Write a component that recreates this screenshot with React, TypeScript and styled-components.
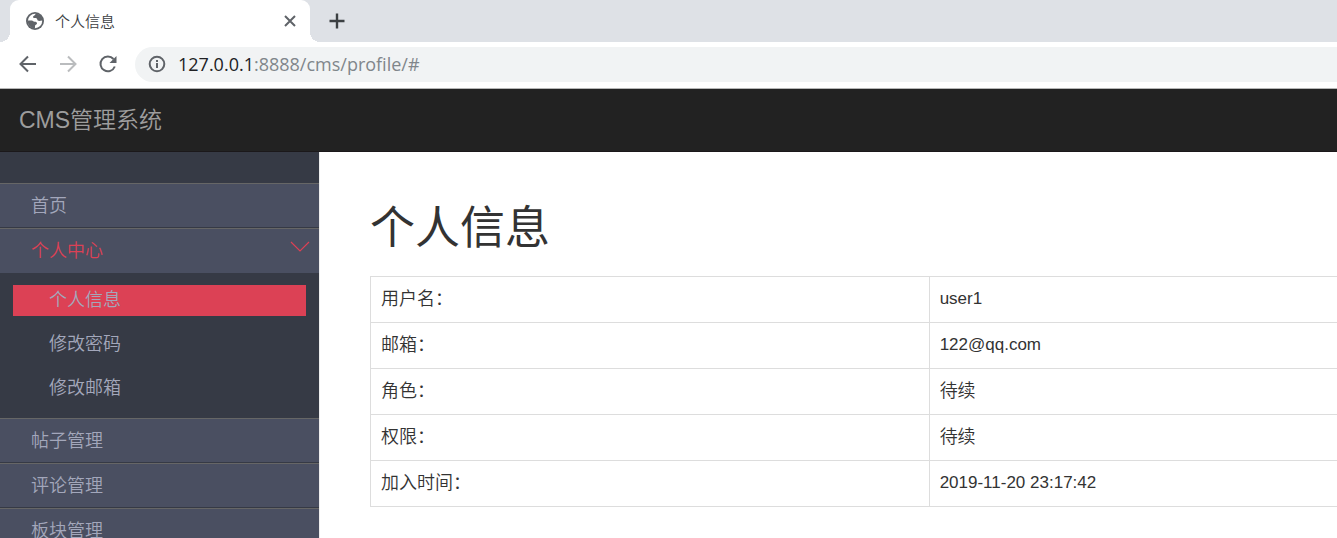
import React from "react";
import styled, { createGlobalStyle, css } from "styled-components";

const GlobalStyle = createGlobalStyle`
  *, *::before, *::after { box-sizing: border-box; }
  html, body { margin: 0; padding: 0; }
  body {
    background: #fff;
    color: #333;
    font-family: "Liberation Sans", "Noto Sans CJK SC", sans-serif;
    font-size: 18px;
    font-weight: 350;
  }
  button, input { font: inherit; }
`;

const Shell = styled.div`
  display: flex;
  flex-direction: column;
  height: 100vh;
  overflow: hidden;
`;

const TabStrip = styled.div`
  display: flex;
  flex: none;
  height: 42px;
  padding-left: 10px;
  background: #dee1e6;
`;

const Tab = styled.div`
  position: relative;
  display: flex;
  align-items: center;
  width: 300px;
  padding: 0 12px 0 16px;
  border-radius: 9px 9px 0 0;
  background: #fff;

  &::before, &::after {
    content: "";
    position: absolute;
    bottom: 0;
    width: 10px;
    height: 10px;
  }
  &::before {
    right: 100%;
    background: radial-gradient(circle at 0 0, transparent 10px, #fff 10px);
  }
  &::after {
    left: 100%;
    background: radial-gradient(circle at 100% 0, transparent 10px, #fff 10px);
  }
`;

const TabTitle = styled.span`
  flex: 1;
  margin-left: 11px;
  color: #3c4043;
  font-family: "Noto Sans CJK SC", sans-serif;
  font-size: 15px;
  line-height: 20px;
`;

const IconButton = styled.button<{ $size: number }>`
  display: flex;
  align-items: center;
  justify-content: center;
  flex: none;
  width: ${(p) => p.$size}px;
  height: ${(p) => p.$size}px;
  padding: 0;
  border: 0;
  background: none;
  color: #5f6368;

  &:disabled { color: #babcbe; }
`;

const NewTabButton = styled(IconButton)`
  align-self: center;
  margin-left: 17px;
  color: #3c4043;
`;

const Toolbar = styled.div`
  display: flex;
  align-items: center;
  flex: none;
  height: 47px;
  padding: 0 0 2px 18px;
  border-bottom: 1px solid #b6b6b6;
`;

const NavButtons = styled.div`
  display: flex;
  gap: 20px;
  margin-right: 17px;
`;

const AddressBar = styled.div`
  display: flex;
  align-items: center;
  flex: 1;
  height: 35px;
  padding-left: 13px;
  border-radius: 18px 0 0 18px;
  background: #f1f3f4;
  color: #5f6368;
`;

const Url = styled.a`
  margin-left: 12px;
  color: #80868b;
  font-family: "Open Sans", sans-serif;
  font-size: 18px;
  font-weight: 400;
  line-height: 24px;
  text-decoration: none;
`;

const Host = styled.span`
  color: #202124;
`;

const Navbar = styled.header`
  display: flex;
  align-items: center;
  flex: none;
  height: 63px;
  padding-left: 19px;
  border-bottom: 1px solid #1b181a;
  background: #222;
`;

const Brand = styled.a`
  color: #9d9d9d;
  font-size: 23px;
  line-height: 32px;
  text-decoration: none;
`;

const Body = styled.div`
  display: flex;
  flex: 1;
  min-height: 0;
`;

const Sidebar = styled.nav`
  flex: none;
  width: 320px;
  padding-top: 31px;
  overflow: hidden;
  border-right: 1px solid #eee;
  background: #363a45;
`;

const Menu = styled.ul`
  margin: 0;
  padding: 0;
  list-style: none;
`;

const MenuLink = styled.a<{ $open?: boolean }>`
  display: flex;
  align-items: center;
  justify-content: space-between;
  height: 45px;
  padding: 0 9px 0 31px;
  border-top: 1px solid #666;
  border-bottom: 1px solid #363a45;
  background: #4a4f61;
  color: #a3a7bb;
  line-height: 24px;
  text-decoration: none;

  svg {
    align-self: flex-start;
    margin-top: 12px;
  }

  ${(p) => p.$open && css`
    border-bottom-color: #4a4f61;
    color: #dc4155;
  `}
`;

const SubMenu = styled.ul`
  display: flex;
  flex-direction: column;
  gap: 13px;
  margin: 0;
  padding: 12px 13px 14px;
  list-style: none;
`;

const SubLink = styled.a<{ $active?: boolean }>`
  display: block;
  padding-left: 36px;
  background: ${(p) => (p.$active ? "#dc4155" : "transparent")};
  color: #a3a7bb;
  line-height: 31px;
  text-decoration: none;
`;

const Content = styled.main`
  flex: 1;
  min-width: 0;
  padding: 44px 0 0 50px;
`;

const Title = styled.h1`
  margin: 0 0 14px;
  font-size: 45px;
  font-weight: 400;
  line-height: 66px;
`;

const InfoTable = styled.table`
  width: 100%;
  border-collapse: collapse;
  table-layout: fixed;
  border-left: 1px solid #ddd;
`;

const cell = css`
  height: 46px;
  padding: 0 10px 1px;
  border-top: 1px solid #ddd;
  border-bottom: 1px solid #ddd;
  font-weight: 350;
  line-height: 24px;
  text-align: left;
`;

const LabelCell = styled.th`
  ${cell}
  width: 57.8%;
  border-right: 1px solid #ddd;
`;

const ValueCell = styled.td<{ $latin: boolean }>`
  ${cell}
  font-size: ${(p) => (p.$latin ? 17 : 18)}px;
`;

const GlobeIcon = () => (
  <svg width="18" height="18" viewBox="0 0 18 18" aria-hidden="true">
    <circle cx="9" cy="9" r="9" fill="#5f6368" />
    <circle cx="9" cy="9" r="7.200" fill="#fff" />
    <path
      d="M10.500 1.500C8.800 2.200 9.300 3.400 8 3.700 6.800 4.100 6.700 5.400 7.800 6c1.200.5 2.600-.2 3.200.8.500.9.200 1.700 1.400 2 1.500.3 2.600-.4 4.100-.3A7.600 7.600 0 0 0 10.500 1.500z"
      fill="#5f6368"
    />
    <path
      d="M1.500 8.500h4.300c1.300.1 1.500 1.200 2.800 1.200 1.500 0 2.600.5 2.400 1.800-.2 1.200-1.500 1-1.900 2-.3.900.3 1.600-.4 3A7.600 7.600 0 0 1 1.500 8.500z"
      fill="#5f6368"
    />
  </svg>
);

const CloseIcon = () => (
  <svg width="12" height="12" viewBox="0 0 12 12" fill="none" stroke="currentColor" strokeWidth="2" aria-hidden="true">
    <path d="M1 1l10 10M11 1L1 11" />
  </svg>
);

const PlusIcon = () => (
  <svg width="16" height="16" viewBox="0 0 16 16" fill="none" stroke="currentColor" strokeWidth="2.4" aria-hidden="true">
    <path d="M8 .5v15M.5 8h15" />
  </svg>
);

const ArrowIcon = ({ forward }: { forward?: boolean }) => (
  <svg width="20" height="20" viewBox="0 0 20 20" fill="none" stroke="currentColor" strokeWidth="2" aria-hidden="true">
    <path d={forward ? "M2 10h15M10 2.500l7.500 7.500-7.500 7.500" : "M18 10H3M10 2.500L2.500 10l7.500 7.500"} />
  </svg>
);

const ReloadIcon = () => (
  <svg width="20" height="20" viewBox="0 0 20 20" aria-hidden="true">
    <path d="M15.500 5A7.400 7.400 0 1 0 16.800 12.500" fill="none" stroke="currentColor" strokeWidth="2" />
    <path d="M18.500 2v7H11.500z" fill="currentColor" />
  </svg>
);

const InfoIcon = () => (
  <svg width="18" height="18" viewBox="0 0 18 18" fill="none" stroke="currentColor" strokeWidth="2" aria-hidden="true">
    <circle cx="9" cy="9" r="7.300" />
    <path d="M9 8v5M9 5v2" />
  </svg>
);

const ChevronIcon = () => (
  <svg width="20" height="12" viewBox="0 0 20 12" fill="none" stroke="currentColor" strokeWidth="1.200" aria-hidden="true">
    <path d="M1 1l9 9 9-9" />
  </svg>
);

const subItems = ["个人信息", "修改密码", "修改邮箱"];
const otherItems = ["帖子管理", "评论管理", "板块管理"];
const profile = [
  { label: "用户名：", value: "user1", latin: true },
  { label: "邮箱：", value: "122@qq.com", latin: true },
  { label: "角色：", value: "待续", latin: false },
  { label: "权限：", value: "待续", latin: false },
  { label: "加入时间：", value: "2019-11-20 23:17:42", latin: true },
];

export default function App() {
  return (
    <Shell lang="zh-CN">
      <GlobalStyle />
      <TabStrip>
        <Tab>
          <GlobeIcon />
          <TabTitle>个人信息</TabTitle>
          <IconButton $size={16} aria-label="关闭"><CloseIcon /></IconButton>
        </Tab>
        <NewTabButton $size={20} aria-label="新标签页"><PlusIcon /></NewTabButton>
      </TabStrip>
      <Toolbar>
        <NavButtons>
          <IconButton $size={20} aria-label="后退"><ArrowIcon /></IconButton>
          <IconButton $size={20} aria-label="前进" disabled><ArrowIcon forward /></IconButton>
          <IconButton $size={20} aria-label="刷新"><ReloadIcon /></IconButton>
        </NavButtons>
        <AddressBar>
          <InfoIcon />
          <Url href="#"><Host>127.0.0.1</Host>:8888/cms/profile/#</Url>
        </AddressBar>
      </Toolbar>
      <Navbar>
        <Brand href="#">CMS管理系统</Brand>
      </Navbar>
      <Body>
        <Sidebar>
          <Menu>
            <li><MenuLink href="#">首页</MenuLink></li>
            <li>
              <MenuLink href="#" $open>个人中心<ChevronIcon /></MenuLink>
              <SubMenu>
                {subItems.map((label, i) => (
                  <li key={label}><SubLink href="#" $active={i === 0}>{label}</SubLink></li>
                ))}
              </SubMenu>
            </li>
            {otherItems.map((label) => (
              <li key={label}><MenuLink href="#">{label}</MenuLink></li>
            ))}
          </Menu>
        </Sidebar>
        <Content>
          <Title>个人信息</Title>
          <InfoTable>
            <tbody>
              {profile.map(({ label, value, latin }) => (
                <tr key={label}>
                  <LabelCell scope="row">{label}</LabelCell>
                  <ValueCell $latin={latin}>{value}</ValueCell>
                </tr>
              ))}
            </tbody>
          </InfoTable>
        </Content>
      </Body>
    </Shell>
  );
}
